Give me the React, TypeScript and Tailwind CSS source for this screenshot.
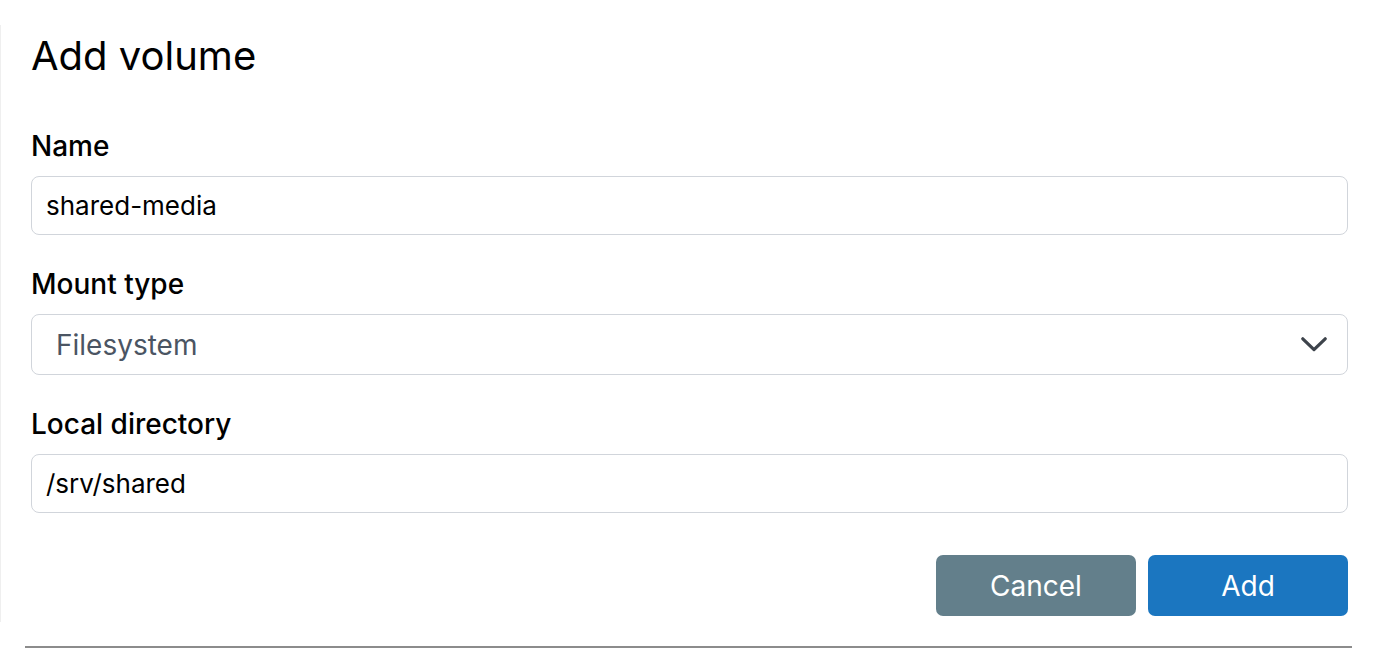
import { useState } from "react";

const Field = ({ label, children }: { label: string; children: React.ReactNode }) => (
  <div className="flex flex-col">
    <label className="mb-[13px] text-[28px] font-medium leading-[34px] text-black">{label}</label>
    {children}
  </div>
);

const App = () => {
  const [name, setName] = useState("shared-media");
  const [dir, setDir] = useState("/srv/shared");

  return (
    <div className="h-[648px] w-[1378px] overflow-hidden bg-white font-['Inter',sans-serif]">
      <div className="mt-[25px] flex h-[597px] flex-col border-l border-[#efefef] pt-[7px] pl-[30px] pr-[30px]">
        {/* Header */}
        <h1 className="text-[40px] font-normal leading-[48px] text-black">Add volume</h1>

        <div className="mt-[49px] flex flex-col gap-[32px]">
          <Field label="Name">
            <input
              value={name}
              onChange={(e) => setName(e.target.value)}
              className="h-[59px] w-full rounded-[8px] border border-[#d1d5db] px-[14px] text-[26px] text-black outline-none"
            />
          </Field>

          <Field label="Mount type">
            <div className="flex h-[61px] w-full items-center justify-between rounded-[8px] border border-[#d1d5db] pl-[24px] pr-[20px]">
              <span className="text-[28px] text-[#4b5563]">Filesystem</span>
              <svg width="26" height="15" viewBox="0 0 26 15" fill="none">
                <polyline
                  points="1.8,1.8 13,12.6 24.2,1.8"
                  stroke="#3d434b"
                  strokeWidth="3.2"
                  strokeLinecap="round"
                  strokeLinejoin="round"
                />
              </svg>
            </div>
          </Field>

          <Field label="Local directory">
            <input
              value={dir}
              onChange={(e) => setDir(e.target.value)}
              className="h-[59px] w-full rounded-[8px] border border-[#d1d5db] px-[14px] text-[26px] text-black outline-none"
            />
          </Field>
        </div>

        {/* Actions */}
        <div className="mt-[42px] flex justify-end gap-[12px]">
          <button className="h-[61px] w-[200px] rounded-[7px] bg-[#637f8b] text-[28px] text-white">Cancel</button>
          <button className="h-[61px] w-[200px] rounded-[7px] bg-[#1b76c0] text-[28px] text-white">Add</button>
        </div>
      </div>

      <div className="mt-[24px] ml-[25px] h-[2px] w-[1327px] bg-[#8c8c8c]" />
    </div>
  );
};

export default App;
